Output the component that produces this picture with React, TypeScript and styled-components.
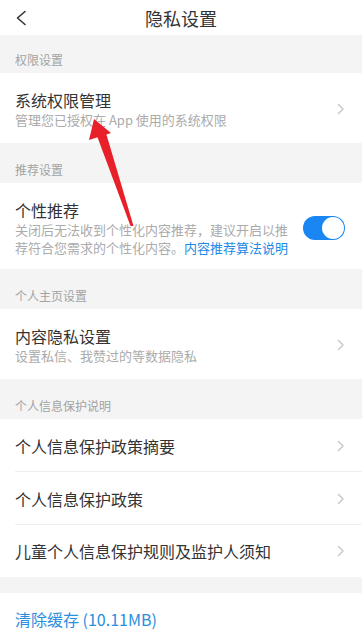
import React from "react";
import styled, { createGlobalStyle } from "styled-components";

const Global = createGlobalStyle`
  html, body { margin: 0; padding: 0; background: #ffffff; }
  body { font-family: "Noto Sans CJK SC", "Noto Sans", sans-serif; -webkit-font-smoothing: antialiased; }
  * { box-sizing: border-box; }
`;

const Page = styled.div`
  position: relative;
  width: 362px;
  min-height: 643px;
  background: #ffffff;
  display: flex;
  flex-direction: column;
`;

const NavBar = styled.header`
  height: 35px;
  display: grid;
  grid-template-columns: 50px 1fr 50px;
  align-items: center;
  background: #ffffff;
`;

const BackButton = styled.div`
  display: flex;
  align-items: center;
  padding-left: 14px;
  height: 28px;
`;

const Title = styled.h1`
  margin: 0;
  text-align: center;
  font-size: 18px;
  font-weight: 400;
  color: #333333;
  line-height: 28px;
`;

const SectionHeader = styled.div<{ $h?: number }>`
  height: ${(p) => p.$h ?? 40}px;
  background: #f4f4f4;
  display: flex;
  align-items: flex-end;
  padding: 0 15px 6px;
  font-size: 12px;
  line-height: 14px;
  color: #a3a3a3;
`;

const Spacer = styled.div`
  height: 16px;
  background: #f4f4f4;
`;

const Row = styled.div<{ $pb?: number }>`
  display: flex;
  align-items: center;
  padding: 16px 17px ${(p) => p.$pb ?? 14}px 15px;
  background: #ffffff;
`;

const SimpleRow = styled.div<{ $divider?: boolean }>`
  position: relative;
  height: ${(p) => (p.$divider ? 53 : 52)}px;
  display: flex;
  align-items: center;
  padding: 0 17px 0 15px;
  background: #ffffff;
  ${(p) =>
    p.$divider
      ? `&::after { content: ""; position: absolute; left: 15px; right: 0; bottom: 0; height: 1px; background: #efefef; }`
      : ""}
`;

const RowText = styled.div`
  flex: 1;
  min-width: 0;
  display: flex;
  flex-direction: column;
`;

const RowTitle = styled.div`
  font-size: 16px;
  line-height: 22px;
  color: #333333;
`;

const RowDesc = styled.div`
  font-size: 13px;
  line-height: 18px;
  color: #ababab;
  padding-right: 10px;
`;

const Link = styled.span`
  color: #1c8ae6;
`;

const ActionText = styled.div`
  font-size: 16px;
  line-height: 22px;
  color: #2a8fe0;
`;

const ToggleTrack = styled.div<{ $on: boolean }>`
  position: relative;
  width: 42px;
  height: 24px;
  border-radius: 12px;
  background: ${(p) => (p.$on ? "#1a86f3" : "#e5e5e5")};
  flex-shrink: 0;
`;

const ToggleKnob = styled.div<{ $on: boolean }>`
  position: absolute;
  top: 1px;
  left: ${(p) => (p.$on ? "19px" : "1px")};
  width: 22px;
  height: 22px;
  border-radius: 50%;
  background: #ffffff;
`;

const Overlay = styled.svg`
  position: absolute;
  left: 0;
  top: 0;
  pointer-events: none;
`;

const Chevron = () => (
  <svg width="8" height="12" viewBox="0 0 8 12" style={{ flexShrink: 0 }}>
    <path d="M1.5 1.5 L6 6 L1.5 10.5" fill="none" stroke="#c9c9c9" strokeWidth="1.5" strokeLinecap="round" strokeLinejoin="round" />
  </svg>
);

const BackIcon = () => (
  <svg width="14" height="16" viewBox="0 0 14 16">
    <path d="M11 1.5 L3.5 8 L11 14.5" fill="none" stroke="#333" strokeWidth="1.6" strokeLinecap="round" strokeLinejoin="round" />
  </svg>
);

const Toggle = ({ on }: { on: boolean }) => (
  <ToggleTrack $on={on}>
    <ToggleKnob $on={on} />
  </ToggleTrack>
);

export default function App() {
  return (
    <>
      <Global />
      <Page>
        <NavBar>
          <BackButton>
            <BackIcon />
          </BackButton>
          <Title>隐私设置</Title>
          <div />
        </NavBar>

        <SectionHeader $h={38}>权限设置</SectionHeader>
        <Row>
          <RowText>
            <RowTitle>系统权限管理</RowTitle>
            <RowDesc>管理您已授权在 App 使用的系统权限</RowDesc>
          </RowText>
          <Chevron />
        </Row>

        <SectionHeader>推荐设置</SectionHeader>
        <Row $pb={12}>
          <RowText>
            <RowTitle>个性推荐</RowTitle>
            <RowDesc>
              关闭后无法收到个性化内容推荐，建议开启以推荐符合您需求的个性化内容。<Link>内容推荐算法说明</Link>
            </RowDesc>
          </RowText>
          <Toggle on={true} />
        </Row>

        <SectionHeader>个人主页设置</SectionHeader>
        <Row>
          <RowText>
            <RowTitle>内容隐私设置</RowTitle>
            <RowDesc>设置私信、我赞过的等数据隐私</RowDesc>
          </RowText>
          <Chevron />
        </Row>

        <SectionHeader>个人信息保护说明</SectionHeader>
        <SimpleRow $divider>
          <RowText>
            <RowTitle>个人信息保护政策摘要</RowTitle>
          </RowText>
          <Chevron />
        </SimpleRow>
        <SimpleRow $divider>
          <RowText>
            <RowTitle>个人信息保护政策</RowTitle>
          </RowText>
          <Chevron />
        </SimpleRow>
        <SimpleRow>
          <RowText>
            <RowTitle>儿童个人信息保护规则及监护人须知</RowTitle>
          </RowText>
          <Chevron />
        </SimpleRow>

        <Spacer />
        <SimpleRow>
          <ActionText>清除缓存 (10.11MB)</ActionText>
        </SimpleRow>

        <Overlay width="362" height="643" viewBox="0 0 362 643">
          <polygon points="94,119 89,140 111,133" fill="#e8202a" />
          <polygon points="97,136 106,133 133.5,226 130.5,226" fill="#e8202a" />
        </Overlay>
      </Page>
    </>
  );
}
